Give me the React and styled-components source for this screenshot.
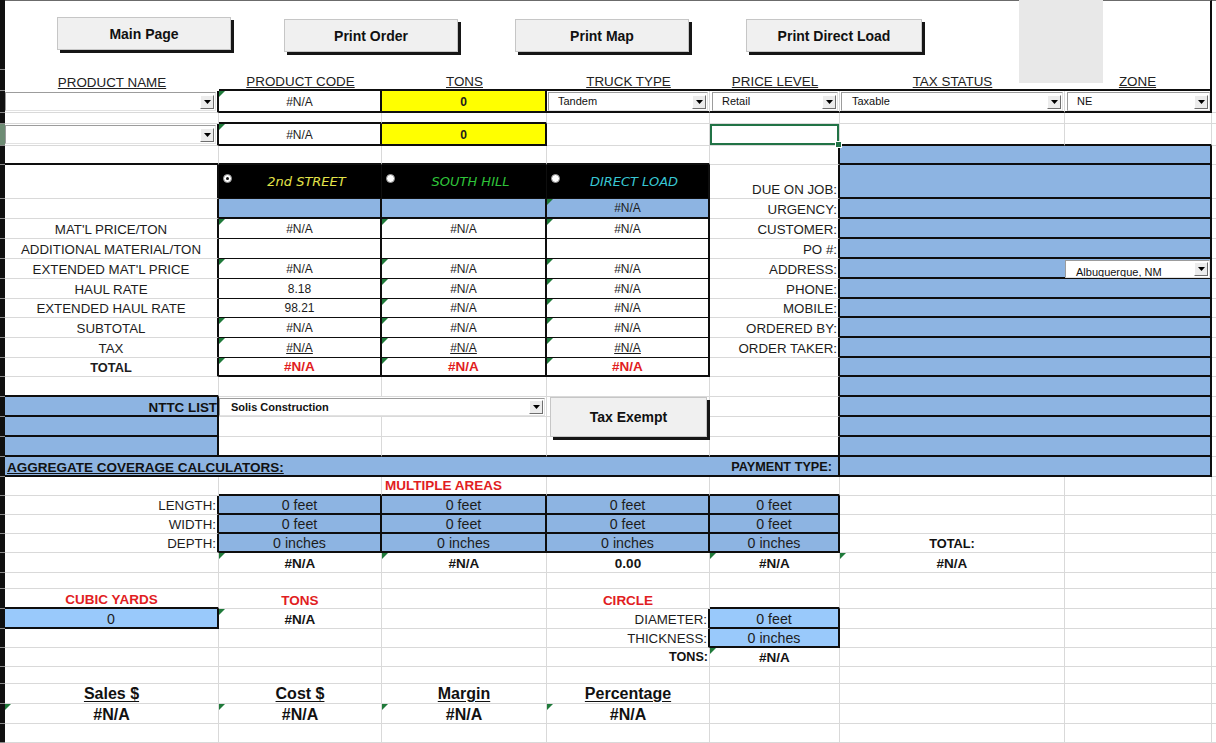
import React from 'react';
import styled, { createGlobalStyle } from 'styled-components';

const INK = '#0e0e0e';
const GRID = '#d9d9d9';
const BLUE = '#8db4e2';
const SKY = '#99c9fb';
const YELLOW = '#ffff00';
const RED = '#e11d22';
const THICK = `2px solid ${INK}`;
const THIN = `1px solid ${INK}`;
const HAIR = `1px solid ${GRID}`;
const NONE = 'none';
const TOP_EDGE = '1px solid #6b6b6b';

const COL_WIDTHS = [5, 214, 163, 165, 163, 130, 225, 147, 4];
const ROW_HEIGHTS = [
  70, 21, 22, 11, 22, 19, 34, 20, 20, 20, 20, 20, 19, 20, 20, 19, 20, 20,
  20, 20, 20, 19, 19, 19, 19, 20, 16, 20, 20, 19, 19, 17, 20, 20, 19,
];
const [A, B, C, D, E, F, G, X] = [2, 3, 4, 5, 6, 7, 8, 9];

const GlobalStyle = createGlobalStyle`
  html, body { margin: 0; padding: 0; background: #ffffff; }
  body { font-family: "Liberation Sans", Arial, sans-serif; color: #1c1c1c; }
`;

const Sheet = styled.div`
  display: grid;
  grid-template-columns: ${COL_WIDTHS.map((w) => `${w}px`).join(' ')};
  grid-template-rows: ${ROW_HEIGHTS.map((h) => `${h}px`).join(' ')};
  width: 1216px;
  height: 743px;
  overflow: hidden;
  background: #ffffff;
`;

const RowHeader = styled.div`
  grid-row: ${(p) => p.$r};
  grid-column: 1;
  box-sizing: border-box;
  background: ${(p) => (p.$active ? '#6e8c74' : '#101010')};
  border-bottom: 1px solid #8a8a8a;
`;

const JUSTIFY = { left: 'flex-start', center: 'center', right: 'flex-end', spread: 'space-between' };

const Cell = styled.div`
  grid-row: ${(p) => p.$r} / span ${(p) => p.$rs || 1};
  grid-column: ${(p) => p.$c} / span ${(p) => p.$cs || 1};
  position: relative;
  box-sizing: border-box;
  min-width: 0;
  display: flex;
  align-items: ${(p) => p.$v || 'flex-end'};
  justify-content: ${(p) => JUSTIFY[p.$align || 'center']};
  padding: ${(p) => p.$pad || '0 2px 1px'};
  background: ${(p) => p.$bg || '#ffffff'};
  border-top: ${(p) => p.$bt || NONE};
  border-right: ${(p) => p.$br || HAIR};
  border-bottom: ${(p) => p.$bb || HAIR};
  box-shadow: ${(p) => (p.$selected ? 'inset 0 0 0 2px #217346' : 'none')};
  white-space: nowrap;
`;

const ErrorMark = styled.span`
  position: absolute;
  top: 0;
  left: 0;
  width: 0;
  height: 0;
  border-style: solid;
  border-width: 6px 6px 0 0;
  border-color: #1f7a3a transparent transparent transparent;
`;

const FillHandle = styled.span`
  position: absolute;
  right: -3px;
  bottom: -3px;
  width: 5px;
  height: 5px;
  background: #217346;
  border: 1px solid #ffffff;
  z-index: 3;
`;

/* ---------- cell text ---------- */

const ColumnHeading = styled.span`
  font-size: 13.4px;
  line-height: 15px;
  color: #222;
  text-decoration: underline;
  text-underline-offset: 1px;
`;

const FieldLabel = styled.span`
  font-size: ${(p) => (p.$strong ? 12.8 : 13.3)}px;
  line-height: 15px;
  font-weight: ${(p) => (p.$strong ? 700 : 400)};
  color: #1c1c1c;
`;

const FIGURE_KIND = {
  plain: 'font-size: 12px; font-weight: 400;',
  tax: 'font-size: 12px; font-weight: 400; text-decoration: underline; text-underline-offset: 1px;',
  total: `font-size: 13.5px; font-weight: 700; color: ${RED};`,
  strong: 'font-size: 12px; font-weight: 700;',
};

const Figure = styled.span`
  line-height: 15px;
  color: #1c1c1c;
  ${(p) => FIGURE_KIND[p.$kind || 'plain']}
`;

const Result = styled.span`
  font-size: 13.5px;
  line-height: 15px;
  font-weight: 700;
  color: #151515;
`;

const Alert = styled.span`
  font-size: 13.5px;
  line-height: 15px;
  font-weight: 700;
  color: ${RED};
`;

const Measure = styled.span`
  font-size: 14.2px;
  line-height: 15px;
  color: #1c1c1c;
`;

const BarTitle = styled.span`
  font-size: ${(p) => p.$size}px;
  line-height: 15px;
  font-weight: 700;
  color: #111;
  text-decoration: ${(p) => (p.$under ? 'underline' : 'none')};
  text-underline-offset: 1px;
`;

const SummaryHeading = styled.span`
  font-size: 16px;
  line-height: 17px;
  font-weight: 700;
  color: #111;
  text-decoration: underline;
  text-underline-offset: 2px;
`;

const SummaryValue = styled.span`
  font-size: 16px;
  line-height: 17px;
  font-weight: 700;
  color: #111;
`;

/* ---------- plant header ---------- */

const Radio = styled.span`
  flex: none;
  align-self: flex-start;
  margin: 9px 0 0 4px;
  width: 9px;
  height: 9px;
  box-sizing: border-box;
  border-radius: 50%;
  background: #ffffff;
  border: 1px solid #8f8f8f;
  display: flex;
  align-items: center;
  justify-content: center;
  &::after {
    content: '';
    width: 3px;
    height: 3px;
    border-radius: 50%;
    background: ${(p) => (p.$on ? '#111' : 'transparent')};
  }
`;

const SiteName = styled.span`
  flex: 1;
  text-align: center;
  font-family: "DejaVu Sans", Verdana, sans-serif;
  font-style: italic;
  font-size: 13px;
  line-height: 16px;
  color: ${(p) => p.$tone};
`;

/* ---------- form controls ---------- */

const Toolbar = styled.div`
  display: flex;
  align-items: flex-start;
  padding: 16px 0 0 52px;
`;

const SheetButton = styled.button`
  flex: none;
  width: ${(p) => p.$w || 174}px;
  height: 33px;
  margin: ${(p) => p.$drop || 0}px 0 0 ${(p) => p.$lead || 0}px;
  padding: 0;
  box-sizing: border-box;
  background: #f0f0f0;
  border: 1px solid #c6c6c6;
  box-shadow: 3px 3px 0 #161616;
  font-family: "Liberation Sans", Arial, sans-serif;
  font-size: 14px;
  font-weight: 700;
  color: #111;
  cursor: default;
`;

const FloatingButton = styled(SheetButton)`
  grid-row: 18 / span 3;
  grid-column: 5;
  align-self: start;
  justify-self: start;
  position: relative;
  z-index: 2;
  width: 157px;
  height: 40px;
  margin: 0 0 0 3px;
`;

const Picture = styled.div`
  grid-row: 1 / span 2;
  grid-column: 7 / span 2;
  align-self: start;
  justify-self: start;
  position: relative;
  z-index: 2;
  margin-left: 179px;
  width: 84px;
  height: 83px;
  background: #e8e8e8;
`;

const DropBox = styled.div`
  flex: ${(p) => (p.$w ? 'none' : 1)};
  width: ${(p) => (p.$w ? `${p.$w}px` : 'auto')};
  height: ${(p) => p.$h || 19}px;
  box-sizing: border-box;
  display: flex;
  align-items: center;
  background: #ffffff;
  border-style: solid;
  border-width: 1px;
  border-color: #9c9c9c #e2e2e2 #e2e2e2 #9c9c9c;
`;

const DropValue = styled.span`
  flex: 1;
  align-self: stretch;
  box-sizing: border-box;
  overflow: hidden;
  padding: ${(p) => (p.$clip ? '5px' : '2px')} 0 0 ${(p) => p.$indent || 9}px;
  font-size: 11px;
  line-height: 13px;
  font-weight: ${(p) => (p.$bold ? 700 : 400)};
  color: #111;
`;

const DropButton = styled.span`
  flex: none;
  width: 14px;
  height: 14px;
  margin-right: 1px;
  box-sizing: border-box;
  display: flex;
  align-items: center;
  justify-content: center;
  background: #ececec;
  border: 1px solid;
  border-color: #ffffff #6f6f6f #6f6f6f #ffffff;
`;

function Dropdown({ value = '', bold, width, height, clip, indent }) {
  return (
    <DropBox $w={width} $h={height}>
      <DropValue $bold={bold} $clip={clip} $indent={indent}>{value}</DropValue>
      <DropButton>
        <svg width="7" height="4" viewBox="0 0 7 4">
          <path d="M0 0h7L3.5 4z" fill="#000" />
        </svg>
      </DropButton>
    </DropBox>
  );
}

/* ---------- sheet contents ---------- */

const COMBO_CELL = { v: 'flex-start', pad: '1px 1px 0 1px' };
const BLUE_ROW = { c: F, cs: 2, bg: BLUE, bb: THICK, br: THICK };

function buildCells() {
  const s = [];
  const add = (o) => s.push(o);

  // button band
  add({
    r: 1, c: A, cs: 7, bt: TOP_EDGE, bb: NONE, br: THICK, v: 'flex-start', align: 'left', pad: '0',
    body: (
      <Toolbar>
        <SheetButton>Main Page</SheetButton>
        <SheetButton $lead={53} $drop={2}>Print Order</SheetButton>
        <SheetButton $lead={57} $drop={2}>Print Map</SheetButton>
        <SheetButton $lead={57} $drop={2} $w={176}>Print Direct Load</SheetButton>
      </Toolbar>
    ),
  });
  add({ r: 1, c: X, bt: TOP_EDGE, bb: NONE, br: NONE });

  // order line headings
  ['PRODUCT NAME', 'PRODUCT CODE', 'TONS', 'TRUCK TYPE', 'PRICE LEVEL', 'TAX STATUS', 'ZONE'].forEach((h, i) =>
    add({
      r: 2, c: A + i, bb: i === 0 ? NONE : THICK, br: i === 6 ? THICK : NONE,
      pad: i === 0 ? '0 2px 1px' : '0 2px',
      body: <ColumnHeading>{h}</ColumnHeading>,
    })
  );
  add({ r: 2, c: X, bb: NONE, br: NONE });

  // first order line
  add({ r: 3, c: A, br: THICK, v: 'flex-start', pad: '1px 1px 0 0', body: <Dropdown /> });
  add({ r: 3, c: B, br: THICK, bb: THICK, tri: true, body: <Figure>#N/A</Figure> });
  add({ r: 3, c: C, bg: YELLOW, br: THICK, bb: THICK, body: <Figure $kind="strong">0</Figure> });
  add({ r: 3, c: D, bb: THICK, ...COMBO_CELL, body: <Dropdown value="Tandem" /> });
  add({ r: 3, c: E, bb: THICK, ...COMBO_CELL, pad: '1px 1px 0 2px', body: <Dropdown value="Retail" /> });
  add({ r: 3, c: F, bb: THICK, ...COMBO_CELL, body: <Dropdown value="Taxable" indent={10} /> });
  add({ r: 3, c: G, bb: THICK, br: THICK, ...COMBO_CELL, pad: '1px 0 0 2px', body: <Dropdown value="NE" /> });

  add({ r: 4, c: B, bb: THICK });
  add({ r: 4, c: C, bb: THICK });

  // second order line
  add({ r: 5, c: A, br: THICK, v: 'flex-start', pad: '1px 1px 0 0', body: <Dropdown /> });
  add({ r: 5, c: B, br: THICK, bb: THICK, tri: true, body: <Figure>#N/A</Figure> });
  add({ r: 5, c: C, bg: YELLOW, br: THICK, bb: THICK, body: <Figure $kind="strong">0</Figure> });
  add({ r: 5, c: E, sel: true });
  add({ r: 5, c: F, bb: THICK });
  add({ r: 5, c: G, bb: THICK });

  // pricing table frame
  [A, B, C, D].forEach((c) => add({ r: 6, c, bb: THICK }));
  add({ r: 6, c: E, br: THICK });

  add({ r: 7, c: A, br: THICK });
  [
    ['2nd STREET', '#e4e44a', true],
    ['SOUTH HILL', '#2fc43a', false],
    ['DIRECT LOAD', '#38c6d2', false],
  ].forEach(([name, tone, on], i) =>
    add({
      r: 7, c: B + i, bg: '#000', bb: THIN, br: i === 2 ? THICK : THIN, v: 'center', align: 'left', pad: '0',
      body: (
        <>
          <Radio $on={on} />
          <SiteName $tone={tone}>{name}</SiteName>
        </>
      ),
    })
  );

  add({ r: 8, c: A, br: THICK });
  add({ r: 8, c: B, bg: BLUE, br: THICK, bb: THICK });
  add({ r: 8, c: C, bg: BLUE, br: THICK, bb: THICK });
  add({ r: 8, c: D, bg: BLUE, br: THICK, bb: THICK, tri: true, body: <Figure>#N/A</Figure> });

  const lines = [
    { label: "MAT'L PRICE/TON", vals: [['#N/A', 1], ['#N/A', 1], ['#N/A', 1]] },
    { label: 'ADDITIONAL MATERIAL/TON', vals: [['', 0], ['', 0], ['', 0]] },
    { label: "EXTENDED MAT'L PRICE", vals: [['#N/A', 1], ['#N/A', 1], ['#N/A', 1]] },
    { label: 'HAUL RATE', vals: [['8.18', 0], ['#N/A', 1], ['#N/A', 1]] },
    { label: 'EXTENDED HAUL RATE', vals: [['98.21', 0], ['#N/A', 1], ['#N/A', 1]] },
    { label: 'SUBTOTAL', vals: [['#N/A', 1], ['#N/A', 1], ['#N/A', 1]] },
    { label: 'TAX', kind: 'tax', vals: [['#N/A', 1], ['#N/A', 1], ['#N/A', 1]] },
    { label: 'TOTAL', kind: 'total', strong: true, vals: [['#N/A', 1], ['#N/A', 1], ['#N/A', 1]] },
  ];
  lines.forEach((line, i) => {
    const r = 9 + i;
    const last = i === lines.length - 1;
    add({ r, c: A, br: THICK, body: <FieldLabel $strong={line.strong}>{line.label}</FieldLabel> });
    line.vals.forEach(([v, tri], j) =>
      add({
        r, c: B + j, br: THICK, bb: last ? THICK : THIN, tri: !!tri,
        body: v ? <Figure $kind={line.kind}>{v}</Figure> : null,
      })
    );
  });

  // customer block
  const fields = ['DUE ON JOB:', 'URGENCY:', 'CUSTOMER:', 'PO #:', 'ADDRESS:', 'PHONE:', 'MOBILE:', 'ORDERED BY:', 'ORDER TAKER:'];
  fields.forEach((f, i) =>
    add({ r: 7 + i, c: E, br: THICK, align: 'right', pad: '0 1px 1px', body: <FieldLabel>{f}</FieldLabel> })
  );
  [16, 17, 18, 19].forEach((r) => add({ r, c: E, br: THICK }));
  add({ r: 20, c: E, br: THICK, bb: THICK });

  for (let r = 6; r <= 21; r += 1) {
    if (r === 11) {
      add({
        r, ...BLUE_ROW, align: 'right', v: 'flex-start', pad: '1px 0 0 0',
        body: <Dropdown value="Albuquerque, NM" width={145} height={18} clip indent={10} />,
      });
    } else {
      add({ r, ...BLUE_ROW });
    }
  }

  // tax exempt list
  add({ r: 17, c: A, bb: THICK });
  add({
    r: 18, c: A, bg: BLUE, br: THICK, bb: THICK, align: 'right', pad: '0 0 0 2px',
    body: <BarTitle $size={13.4}>NTTC LIST</BarTitle>,
  });
  add({
    r: 18, c: B, cs: 2, v: 'flex-start', pad: '1px 1px 0 0',
    body: <Dropdown value="Solis Construction" bold height={18} indent={11} />,
  });
  add({ r: 19, c: A, bg: BLUE, br: THICK, bb: THICK });
  add({ r: 20, c: A, bg: BLUE, br: THICK, bb: THICK });
  [B, C, D].forEach((c) => add({ r: 20, c, bb: THICK }));

  add({
    r: 21, c: A, cs: 5, bg: BLUE, bb: THICK, br: THICK, align: 'spread', pad: '0 6px 0 2px',
    body: (
      <>
        <BarTitle $size={13.5} $under>AGGREGATE COVERAGE CALCULATORS:</BarTitle>
        <BarTitle $size={12.7}>PAYMENT TYPE:</BarTitle>
      </>
    ),
  });

  // area calculators
  [B, D, E].forEach((c) => add({ r: 22, c, bb: THICK }));
  add({ r: 22, c: C, bb: THICK, align: 'left', pad: '0 2px 1px 3px', body: <Alert>MULTIPLE AREAS</Alert> });

  [
    ['LENGTH:', '0 feet'],
    ['WIDTH:', '0 feet'],
    ['DEPTH:', '0 inches'],
  ].forEach(([label, value], i) => {
    const r = 23 + i;
    add({ r, c: A, br: THICK, align: 'right', pad: '0 1px 1px', body: <FieldLabel>{label}</FieldLabel> });
    [B, C, D, E].forEach((c) =>
      add({ r, c, bg: BLUE, br: THICK, bb: THICK, pad: '0 2px', body: <Measure>{value}</Measure> })
    );
  });
  add({ r: 25, c: F, body: <BarTitle $size={12.8}>TOTAL:</BarTitle> });

  [
    [B, '#N/A', true],
    [C, '#N/A', true],
    [D, '0.00', false],
    [E, '#N/A', true],
    [F, '#N/A', true],
  ].forEach(([c, v, tri]) => add({ r: 26, c, tri, body: <Result>{v}</Result> }));

  // volume and circle
  add({ r: 28, c: A, bb: THICK, pad: '0 2px', body: <Alert>CUBIC YARDS</Alert> });
  add({ r: 28, c: B, pad: '0 2px', body: <Alert>TONS</Alert> });
  add({ r: 28, c: D, pad: '0 2px', body: <Alert>CIRCLE</Alert> });
  add({ r: 28, c: E, bb: THICK });

  add({ r: 29, c: A, bg: SKY, br: THICK, bb: THICK, pad: '0 2px', body: <Measure>0</Measure> });
  add({ r: 29, c: B, tri: true, body: <Result>#N/A</Result> });
  add({ r: 29, c: D, br: THICK, align: 'right', pad: '0 1px 1px', body: <FieldLabel>DIAMETER:</FieldLabel> });
  add({ r: 29, c: E, bg: SKY, br: THICK, bb: THICK, pad: '0 2px', body: <Measure>0 feet</Measure> });

  add({ r: 30, c: D, br: THICK, align: 'right', pad: '0 1px 1px', body: <FieldLabel>THICKNESS:</FieldLabel> });
  add({ r: 30, c: E, bg: SKY, br: THICK, bb: THICK, pad: '0 2px', body: <Measure>0 inches</Measure> });

  add({ r: 31, c: D, align: 'right', pad: '0 1px 1px', body: <BarTitle $size={12.6}>TONS:</BarTitle> });
  add({ r: 31, c: E, tri: true, body: <Result>#N/A</Result> });

  // summary
  ['Sales $', 'Cost $', 'Margin', 'Percentage'].forEach((h, i) => {
    add({ r: 33, c: A + i, body: <SummaryHeading>{h}</SummaryHeading> });
    add({ r: 34, c: A + i, tri: true, pad: '0 2px', body: <SummaryValue>#N/A</SummaryValue> });
  });

  return s;
}

function withFillers(cells) {
  const taken = new Set();
  cells.forEach((cell) => {
    for (let r = cell.r; r < cell.r + (cell.rs || 1); r += 1) {
      for (let c = cell.c; c < cell.c + (cell.cs || 1); c += 1) taken.add(`${r}:${c}`);
    }
  });
  const out = [...cells];
  for (let r = 1; r <= ROW_HEIGHTS.length; r += 1) {
    for (let c = A; c <= X; c += 1) {
      if (!taken.has(`${r}:${c}`)) out.push({ r, c, br: c === X ? NONE : undefined });
    }
  }
  return out;
}

const CELLS = withFillers(buildCells());

export default function App() {
  return (
    <>
      <GlobalStyle />
      <Sheet>
        {ROW_HEIGHTS.map((_, i) => (
          <RowHeader key={`h${i}`} $r={i + 1} $active={i + 1 === 5} />
        ))}
        {CELLS.map((cell) => (
          <Cell
            key={`${cell.r}:${cell.c}`}
            $r={cell.r}
            $c={cell.c}
            $rs={cell.rs}
            $cs={cell.cs}
            $bg={cell.bg}
            $bt={cell.bt}
            $br={cell.br}
            $bb={cell.bb}
            $v={cell.v}
            $align={cell.align}
            $pad={cell.pad}
            $selected={cell.sel}
          >
            {cell.tri && <ErrorMark />}
            {cell.body}
            {cell.sel && <FillHandle />}
          </Cell>
        ))}
        <Picture />
        <FloatingButton>Tax Exempt</FloatingButton>
      </Sheet>
    </>
  );
}
